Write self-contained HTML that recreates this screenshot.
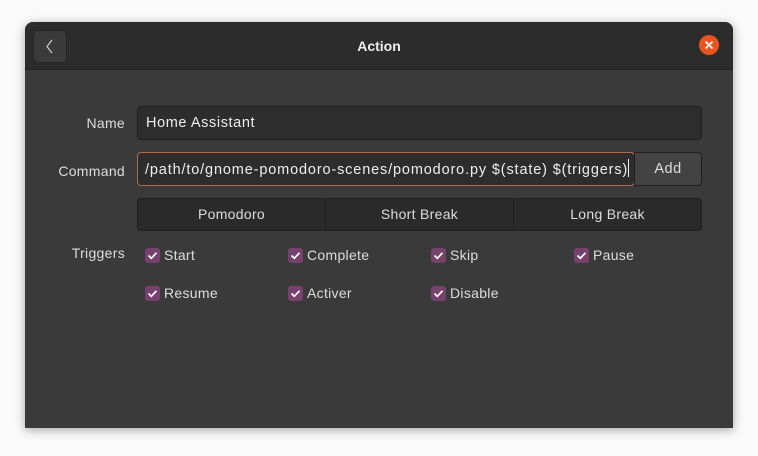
<!DOCTYPE html>
<html><head><style>
body{margin:0;width:758px;height:456px;background:#fafafa;font-family:"Liberation Sans",sans-serif;position:relative;overflow:hidden}
.win{position:absolute;left:25px;top:22px;width:708px;height:406px;background:#3a3a3a;border-radius:8px 8px 0 0;box-shadow:0 2px 10px rgba(0,0,0,.35);overflow:hidden}
.hb{position:absolute;left:0;top:0;width:708px;height:47px;background:#2c2c2c;border-bottom:1px solid #222}
.back{position:absolute;left:8px;top:8px;width:32px;height:31px;background:#3a3a3a;border:1px solid #262626;border-radius:5px}
.title{position:absolute;left:0;right:0;top:16px;text-align:center;color:#eee;font-weight:bold;font-size:14px}
.close{position:absolute;left:674px;top:13px;width:20px;height:20px;border-radius:50%;background:#e95420}
.lbl{position:absolute;color:#ddd;font-size:14px;text-align:right;width:100px;letter-spacing:0.3px}
.entry{position:absolute;background:#2d2d2d;border:1px solid #1f1f1f;border-radius:4px;color:#eee;font-size:14.5px;box-sizing:border-box;padding-left:8px;line-height:34px;white-space:nowrap}
.seg{position:absolute;left:112px;top:176px;width:565px;height:33px;background:#2a2a2a;border:1px solid #1f1f1f;border-radius:4px;box-sizing:border-box;display:flex}
.seg div{flex:1;text-align:center;color:#ddd;font-size:14px;line-height:31px;border-left:1px solid #1f1f1f;letter-spacing:0.3px}
.seg div:first-child{border-left:none}
.cb{position:absolute;color:#ddd;font-size:14px;letter-spacing:0.3px}
.cb i{position:absolute;left:0;top:1px;width:15px;height:15px;background:#77416e;border-radius:3px}
.cb span{position:absolute;left:19px;top:0;white-space:nowrap}
</style></head><body>
<div class="win">
 <div class="hb">
  <div class="back"><svg width="32" height="31"><path d="M18 9 L13 15.5 L18 22" stroke="#ccc" stroke-width="1.2" fill="none"/></svg></div>
  <div class="title">Action</div>
  <div class="close"><svg width="20" height="20"><path d="M6.5 6.5L13.5 13.5M13.5 6.5L6.5 13.5" stroke="#fff" stroke-width="1.6"/></svg></div>
 </div>
 <div class="lbl" style="left:0;top:93px">Name</div>
 <div class="entry" style="left:112px;top:84px;width:565px;height:34px;line-height:33px;letter-spacing:0.6px">Home Assistant</div>
 <div class="lbl" style="left:0;top:141px">Command</div>
 <div class="entry" style="left:112px;top:130px;width:498px;height:34px;border-color:#b5684c;border-width:1.5px;padding-left:7px;line-height:34px;letter-spacing:0.85px">/path/to/gnome-pomodoro-scenes/pomodoro.py $(state) $(triggers)<span style="display:inline-block;width:1px;height:18px;background:#eee;vertical-align:-3px"></span></div>
 <div class="entry" style="left:609px;top:130px;width:68px;height:34px;background:#434343;border-radius:0 4px 4px 0;text-align:center;padding:0;color:#ddd;line-height:33px;letter-spacing:0.5px">Add</div>
 <div class="seg"><div>Pomodoro</div><div>Short Break</div><div>Long Break</div></div>
 <div class="lbl" style="left:0;top:223px">Triggers</div>
 <div class="cb" style="left:120px;top:225px"><i><svg width="15" height="15"><path d="M3.5 7.5L6.3 10.3L11.5 4.8" stroke="#fff" stroke-width="1.7" fill="none"/></svg></i><span>Start</span></div>
 <div class="cb" style="left:263px;top:225px"><i><svg width="15" height="15"><path d="M3.5 7.5L6.3 10.3L11.5 4.8" stroke="#fff" stroke-width="1.7" fill="none"/></svg></i><span>Complete</span></div>
 <div class="cb" style="left:406px;top:225px"><i><svg width="15" height="15"><path d="M3.5 7.5L6.3 10.3L11.5 4.8" stroke="#fff" stroke-width="1.7" fill="none"/></svg></i><span>Skip</span></div>
 <div class="cb" style="left:549px;top:225px"><i><svg width="15" height="15"><path d="M3.5 7.5L6.3 10.3L11.5 4.8" stroke="#fff" stroke-width="1.7" fill="none"/></svg></i><span>Pause</span></div>
 <div class="cb" style="left:120px;top:263px"><i><svg width="15" height="15"><path d="M3.5 7.5L6.3 10.3L11.5 4.8" stroke="#fff" stroke-width="1.7" fill="none"/></svg></i><span>Resume</span></div>
 <div class="cb" style="left:263px;top:263px"><i><svg width="15" height="15"><path d="M3.5 7.5L6.3 10.3L11.5 4.8" stroke="#fff" stroke-width="1.7" fill="none"/></svg></i><span>Activer</span></div>
 <div class="cb" style="left:406px;top:263px"><i><svg width="15" height="15"><path d="M3.5 7.5L6.3 10.3L11.5 4.8" stroke="#fff" stroke-width="1.7" fill="none"/></svg></i><span>Disable</span></div>
</div>
</body></html>
